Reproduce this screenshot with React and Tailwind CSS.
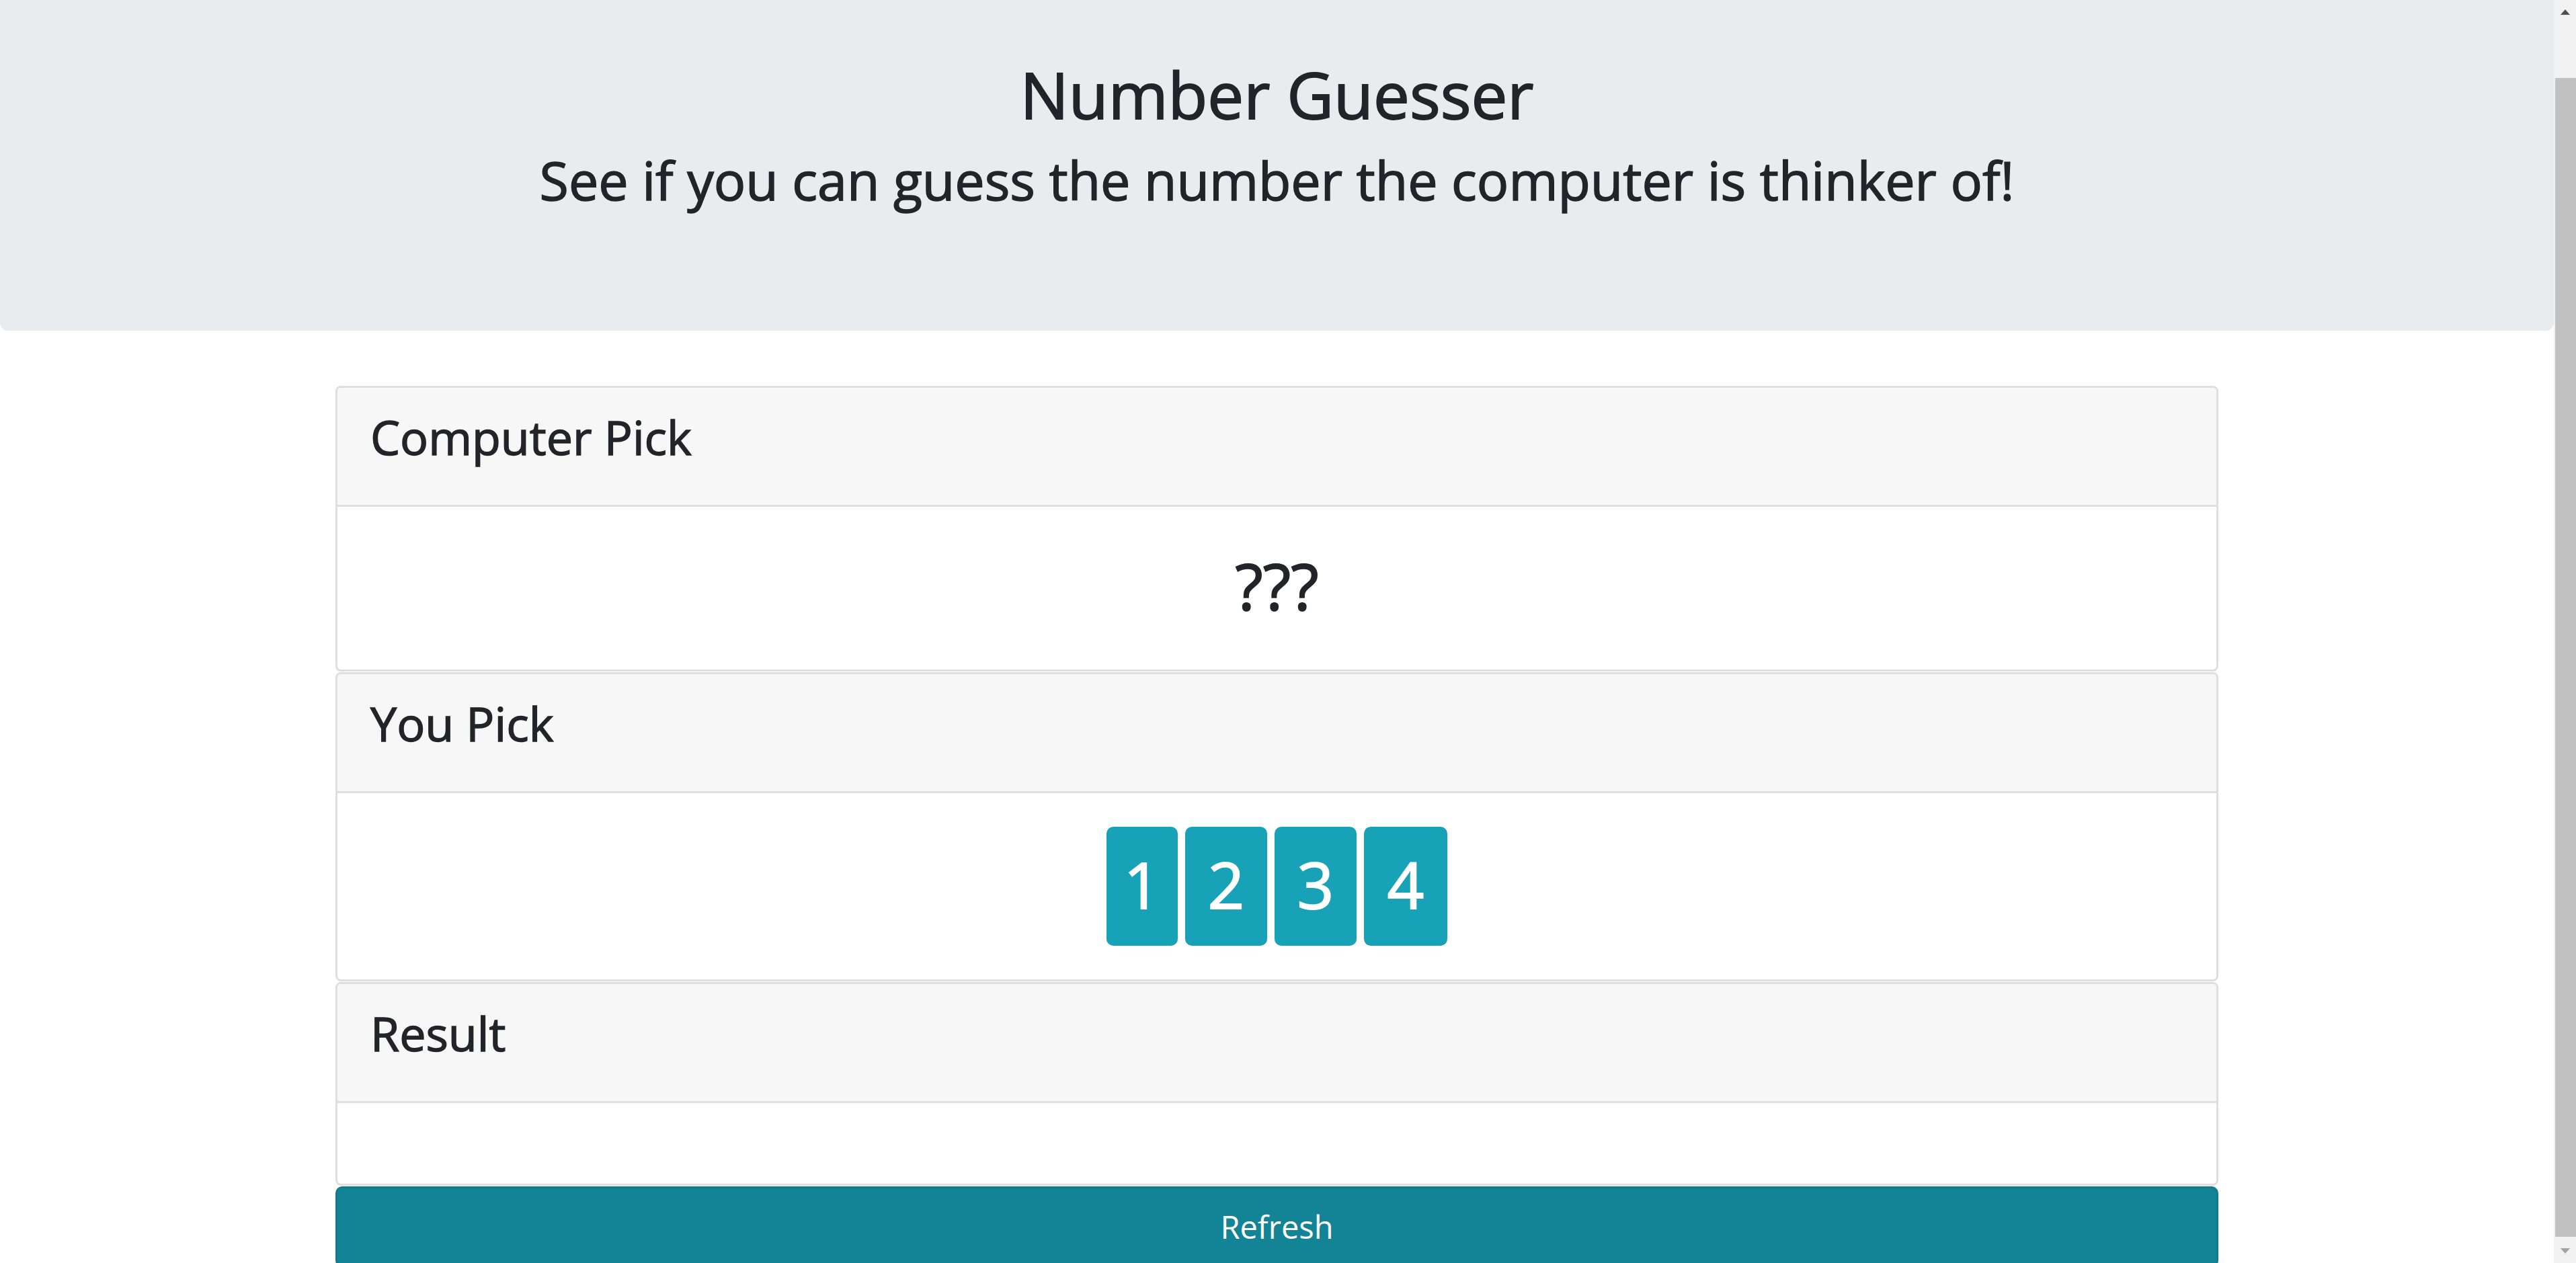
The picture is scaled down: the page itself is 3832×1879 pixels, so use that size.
import React from 'react';

const picks = [
  { n: 1, width: 'w-[106px]' },
  { n: 2, width: 'w-[122px]' },
  { n: 3, width: 'w-[122px]' },
  { n: 4, width: 'w-[124px]' },
];

function Scrollbar() {
  return (
    <div className="flex h-full w-[33px] shrink-0 flex-col bg-[#f1f1f1]">
      {/* up arrow + empty track above thumb */}
      <div className="flex h-[116px] justify-center pt-[14px]">
        <svg width="14" height="8" viewBox="0 0 14 8">
          <path d="M0 8 L7 0 L14 8 Z" fill="#505050" />
        </svg>
      </div>
      <div className="ml-[2px] h-[1724px] bg-[#c1c1c1]"></div>
      <div className="flex flex-1 items-end justify-center pb-[14px]">
        <svg width="14" height="8" viewBox="0 0 14 8">
          <path d="M0 0 L14 0 L7 8 Z" fill="#a3a3a3" />
        </svg>
      </div>
    </div>
  );
}

function Card({ title, bodyClass, children }) {
  return (
    <div className="overflow-hidden rounded-[8px] border-[3px] border-[#dfdfdf] bg-white">
      <div className="h-[177px] border-b-[3px] border-[#dfdfdf] bg-[#f7f7f7] pl-[49px] pt-[31px]">
        <h3 className="text-[70px] leading-[84px] text-[#212529] [-webkit-text-stroke:1.4px_currentColor]">{title}</h3>
      </div>
      <div className={bodyClass}>{children}</div>
    </div>
  );
}

export default function App() {
  return (
    <div className="flex h-screen w-full overflow-hidden bg-white font-['Open_Sans','Noto_Sans',sans-serif] text-[#212529]">
      <div className="flex min-w-0 flex-1 flex-col">
        {/* Jumbotron */}
        <div className="h-[492px] shrink-0 rounded-b-[12px] bg-[#e9ecef] pt-[82px] text-center">
          <h1 className="mb-[23px] text-[96px] leading-[115px] [-webkit-text-stroke:1.8px_currentColor]">Number Guesser</h1>
          <h2 className="text-[79px] leading-[95px] [-webkit-text-stroke:1.5px_currentColor]">
            See if you can guess the number the computer is thinker of!
          </h2>
        </div>

        {/* Game */}
        <div className="mx-auto mt-[82px] flex w-[2801px] flex-col gap-[1px]">
          <Card title="Computer Pick" bodyClass="flex h-[242px] items-center justify-center pb-[10px]">
            <h1 className="text-[96px] leading-[115px] [-webkit-text-stroke:1.8px_currentColor]">???</h1>
          </Card>

          <Card title="You Pick" bodyClass="flex h-[277px] items-center justify-center gap-[11px]">
            {picks.map((p) => (
              <button
                key={p.n}
                className={`${p.width} flex h-[177px] items-center justify-center rounded-[10px] bg-[#17a2b8] pb-[8px] text-[96px] leading-none text-white [-webkit-text-stroke:1.8px_currentColor]`}
              >
                {p.n}
              </button>
            ))}
          </Card>

          <Card title="Result" bodyClass="h-[120px]"></Card>

          <button className="h-[120px] w-full rounded-[10px] border-[3px] border-[#117a8b] bg-[#138496] text-[47px] leading-none text-white">
            Refresh
          </button>
        </div>
      </div>

      <Scrollbar />
    </div>
  );
}
